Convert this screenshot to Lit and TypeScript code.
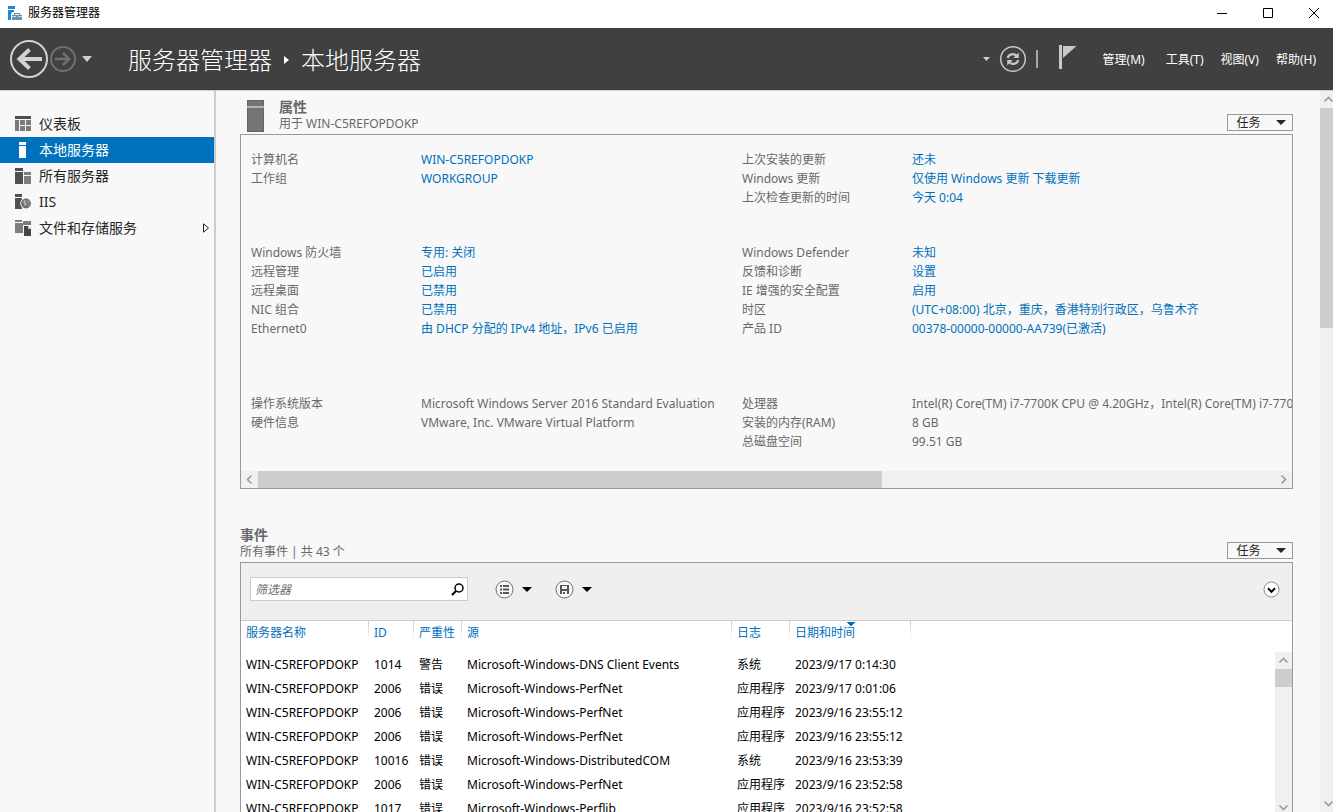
import { LitElement, html, css, svg, nothing } from "lit";
import { customElement } from "lit/decorators.js";
import { classMap } from "lit/directives/class-map.js";

type Property = { name: string; value: string; link?: boolean };

const link = (name: string, value: string): Property => ({ name, value, link: true });
const plain = (name: string, value: string): Property => ({ name, value });

const PROPERTY_GROUPS: Property[][] = [
  [link("计算机名", "WIN-C5REFOPDOKP"), link("工作组", "WORKGROUP")],
  [
    link("上次安装的更新", "还未"),
    link("Windows 更新", "仅使用 Windows 更新 下载更新"),
    link("上次检查更新的时间", "今天 0:04"),
  ],
  [
    link("Windows 防火墙", "专用: 关闭"),
    link("远程管理", "已启用"),
    link("远程桌面", "已禁用"),
    link("NIC 组合", "已禁用"),
    link("Ethernet0", "由 DHCP 分配的 IPv4 地址，IPv6 已启用"),
  ],
  [
    link("Windows Defender", "未知"),
    link("反馈和诊断", "设置"),
    link("IE 增强的安全配置", "启用"),
    link("时区", "(UTC+08:00) 北京，重庆，香港特别行政区，乌鲁木齐"),
    link("产品 ID", "00378-00000-00000-AA739(已激活)"),
  ],
  [
    plain("操作系统版本", "Microsoft Windows Server 2016 Standard Evaluation"),
    plain("硬件信息", "VMware, Inc. VMware Virtual Platform"),
  ],
  [
    plain("处理器", "Intel(R) Core(TM) i7-7700K CPU @ 4.20GHz，Intel(R) Core(TM) i7-7700K CPU @ 4.20GHz"),
    plain("安装的内存(RAM)", "8 GB"),
    plain("总磁盘空间", "99.51 GB"),
  ],
];

const HOST = "WIN-C5REFOPDOKP";
const EVENTS: string[][] = [
  [HOST, "1014", "警告", "Microsoft-Windows-DNS Client Events", "系统", "2023/9/17 0:14:30"],
  [HOST, "2006", "错误", "Microsoft-Windows-PerfNet", "应用程序", "2023/9/17 0:01:06"],
  [HOST, "2006", "错误", "Microsoft-Windows-PerfNet", "应用程序", "2023/9/16 23:55:12"],
  [HOST, "2006", "错误", "Microsoft-Windows-PerfNet", "应用程序", "2023/9/16 23:55:12"],
  [HOST, "10016", "错误", "Microsoft-Windows-DistributedCOM", "系统", "2023/9/16 23:53:39"],
  [HOST, "2006", "错误", "Microsoft-Windows-PerfNet", "应用程序", "2023/9/16 23:52:58"],
  [HOST, "1017", "错误", "Microsoft-Windows-Perflib", "应用程序", "2023/9/16 23:52:58"],
];
const COLUMNS = ["服务器名称", "ID", "严重性", "源", "日志", "日期和时间"];

const caret = (w: number, h: number) => html`
  <svg width=${w} height=${h} viewBox="0 0 ${w} ${h}" fill="currentColor" aria-hidden="true">
    <path d="M0 0H${w}L${w / 2} ${h}Z" />
  </svg>`;

const CHEVRONS = {
  up: "M4.5 10.5L8.5 6.5L12.5 10.5",
  down: "M4.5 6.5L8.5 10.5L12.5 6.5",
  left: "M10.5 4.5L6.5 8.5L10.5 12.5",
  right: "M6.5 4.5L10.5 8.5L6.5 12.5",
};
const scrollButton = (dir: keyof typeof CHEVRONS, label: string) => html`
  <button class="scroll-btn" aria-label=${label}>
    <svg width="17" height="17" viewBox="0 0 17 17" fill="none" stroke="#9b9b9b" stroke-width="1.6" aria-hidden="true">
      <path d=${CHEVRONS[dir]} />
    </svg>
  </button>`;

const NAV_ICONS = {
  dashboard: svg`
    <path d="M0 0H16V3H0Z" fill="#4f4f4f"/>
    <path d="M0 4H4V15H0ZM5 4H10V9H5ZM11 4H16V9H11ZM5 10H10V15H5ZM11 10H16V15H11Z" fill="#7a7a7a"/>`,
  local: svg`<path d="M4 0H11V3H4ZM4 4H11V16H4Z" fill="#fff"/>`,
  all: svg`
    <path d="M0 0H8V3H0ZM0 4H8V16H0Z" fill="#505050"/>
    <path d="M9 4H16V7H9ZM9 8H16V16H9Z" fill="#7d7d7d"/>`,
  iis: svg`
    <path d="M0 0H7V3H0ZM0 4H7V15H0Z" fill="#505050"/>
    <circle cx="11" cy="9.5" r="5.8" fill="#f8f8f8"/>
    <circle cx="11" cy="9.5" r="4.9" fill="#6d6d6d"/>
    <path d="M8 7.5L10 6L11 7L10 8.500L12 9.500L11 12L9.500 11.500L9 9.500ZM12.500 6L14.500 8L13.500 9L12.500 8ZM13 10.500L14.500 10.500L13.500 12.500Z" fill="#b5b5b5"/>`,
  storage: svg`
    <path d="M0 0H7V2H0ZM0 3H8V13H0Z" fill="#7d7d7d"/>
    <path d="M8 1H16V5H8Z" fill="#7d7d7d"/>
    <path d="M9 6H13L16 9V16H9V6Z" fill="#454545"/>
    <path d="M13 5.500L16.500 9H13Z" fill="#cfcfcf"/>`,
};

@customElement("app-root")
export class AppRoot extends LitElement {
  static styles = css`
    :host {
      display: flex;
      flex-direction: column;
      height: 100vh;
      overflow: hidden;
      background: #f8f8f8;
      color: #686868;
      font: 12px/16px "Noto Sans", "Noto Sans CJK SC", sans-serif;
    }
    *, *::before, *::after { box-sizing: border-box; }
    svg { display: block; flex: none; }
    button {
      display: inline-flex;
      align-items: center;
      justify-content: center;
      padding: 0;
      border: 0;
      background: none;
      color: inherit;
      font: inherit;
    }
    a { color: #0071bc; text-decoration: none; }
    h1, h2, p, dl, dd, ul { margin: 0; padding: 0; }

    .titlebar {
      flex: none;
      display: flex;
      align-items: center;
      height: 28px;
      padding: 0 14px 3px 8px;
      gap: 5px;
      background: #fff;
      color: #000;
    }
    .window-buttons { display: flex; gap: 36px; margin-left: auto; }

    .header {
      flex: none;
      display: flex;
      align-items: center;
      height: 62px;
      padding: 0 17px 0 9px;
      background: #404040;
      color: #fff;
    }
    .history { display: flex; align-items: center; gap: 1px; color: #cfcfcf; }
    .history-menu { width: 20px; height: 24px; }
    .crumbs {
      display: flex;
      align-items: center;
      gap: 12px;
      margin-left: 31px;
      padding-top: 1px;
      font-size: 24px;
      line-height: 32px;
      font-weight: 300;
      white-space: nowrap;
    }
    .crumbs h1 { font: inherit; }
    .crumbs a { color: inherit; }
    .commands { display: flex; align-items: center; margin-left: auto; color: #cfcfcf; gap: 9px; }
    .divider { width: 2px; height: 18px; background: #a8a8a8; }
    .flag { margin: 0 17px 4px 12px; }
    .menus { display: flex; gap: 17px; padding-top: 2px; color: #fff; white-space: nowrap; }
    .menus button:first-child { margin-right: 4px; }

    .body { flex: 1; display: flex; min-height: 0; border-top: 1px solid #ccc; }
    .sidebar {
      flex: 0 0 216px;
      padding-top: 20px;
      border-right: 2px solid #ccc;
    }
    .sidebar ul { list-style: none; }
    .nav {
      display: flex;
      align-items: center;
      gap: 8px;
      height: 26px;
      padding: 0 4px 0 15px;
      color: #262626;
      font-size: 14px;
      line-height: 20px;
    }
    .nav.selected { background: #0071bc; color: #fff; }
    .expander { margin-left: auto; }

    main { flex: 1; min-width: 0; overflow: hidden; padding: 6px 27px 0 24px; }
    .section-head { display: flex; align-items: flex-end; height: 37px; }
    .section-head.events { margin-top: 36px; }
    .server-icon { margin: 0 15px 2px 7px; }
    .headings { flex: 1; padding-bottom: 2px; }
    .section-head h2 { margin-bottom: 1px; font-size: 14px; line-height: 16px; font-weight: 700; }
    .tasks {
      width: 66px;
      height: 17px;
      margin-bottom: 3px;
      padding-left: 2px;
      gap: 15px;
      border: 1px solid #999;
      color: #262626;
    }

    .panel { border: 1px solid #999; }
    .viewport { overflow: hidden; padding: 15px 0 20px 10px; }
    .groups {
      display: grid;
      grid-template-columns: 491px max-content;
      grid-template-rows: 93px 151px 57px;
    }
    .group {
      display: grid;
      grid-template-columns: 170px max-content;
      grid-auto-rows: 19px;
      line-height: 19px;
      white-space: nowrap;
    }

    .scroll-btn { flex: none; width: 17px; height: 17px; }
    .hscroll { display: flex; height: 17px; background: #f0f0f0; }
    .vscroll { display: flex; flex-direction: column; background: #f0f0f0; overflow: hidden; }
    .track { flex: 1; min-height: 0; }
    .hscroll .thumb { width: 61.4%; height: 100%; background: #cdcdcd; }
    .vscroll .thumb { background: #cdcdcd; }
    .page-scroll { flex: 0 0 13px; }
    .page-scroll .thumb { height: 32%; }
    .list-scroll { flex: 0 0 17px; margin-top: 31px; height: 164px; }
    .list-scroll .thumb { height: 18px; }

    .toolbar {
      display: flex;
      align-items: center;
      height: 58px;
      padding: 0 12px 5px 9px;
      background: #efefef;
      border-bottom: 1px solid #ccc;
      color: #000;
    }
    .filter {
      display: flex;
      align-items: center;
      width: 218px;
      height: 24px;
      margin-right: 27px;
      padding-right: 3px;
      border: 1px solid #ccc;
      background: #fff;
    }
    .filter input {
      flex: 1;
      min-width: 0;
      height: 22px;
      padding: 0 4px;
      border: 0;
      outline: 0;
      background: none;
      font: inherit;
    }
    .filter input::placeholder { color: #6d6d6d; font-style: italic; opacity: 1; }
    .split { gap: 8px; margin-right: 23px; }
    .expand { margin-left: auto; }

    .list { display: flex; justify-content: space-between; background: #fff; color: #000; }
    table { border-collapse: collapse; table-layout: fixed; width: 670px; }
    th, td { padding: 0 0 0 5px; text-align: left; white-space: nowrap; font-weight: 400; }
    th {
      height: 32px;
      padding-bottom: 8px;
      color: #0071bc;
      background: linear-gradient(#ccc, #fff) right top / 1px 20px no-repeat;
    }
    th.sorted {
      background:
        conic-gradient(from -45deg at 50% 100%, #0071bc 90deg, transparent 0) 56px 1px / 10px 5px no-repeat,
        linear-gradient(#ccc, #fff) right top / 1px 20px no-repeat;
    }
    td { height: 24px; }
    .c0 { width: 128px; }
    .c1 { width: 45px; }
    .c2 { width: 48px; }
    .c3 { width: 270px; }
    .c4 { width: 58px; }
    .c5 { width: 121px; }
  `;

  private navItem(icon: keyof typeof NAV_ICONS, label: string, selected = false, expandable = false) {
    return html`<li>
      <a href="#" class=${classMap({ nav: true, selected })} aria-current=${selected ? "page" : nothing}>
        <svg width="16" height="16" viewBox="0 0 16 16" aria-hidden="true">${NAV_ICONS[icon]}</svg>
        <span>${label}</span>
        ${expandable
          ? html`<svg class="expander" width="8" height="10" viewBox="0 0 8 10" fill="none" stroke="#262626" aria-hidden="true">
              <path d="M1.500 0.800V9.200L6.500 5Z" />
            </svg>`
          : nothing}
      </a>
    </li>`;
  }

  private group(items: Property[]) {
    return html`<dl class="group">
      ${items.map(
        (p) => html`<dt>${p.name}</dt>
          <dd>${p.link ? html`<a href="#">${p.value}</a>` : p.value}</dd>`
      )}
    </dl>`;
  }

  private tasksButton() {
    return html`<button class="tasks"><span>任务</span>${caret(10, 5)}</button>`;
  }

  render() {
    return html`
      <div class="titlebar">
        <svg width="15" height="14" viewBox="0 0 15 14" aria-hidden="true">
          <path d="M0 0H7V3H0ZM0 4H6V6H4L3 8V14H0Z" fill="#1e88d8" />
          <path d="M4 9H14V14H4Z" fill="#7090a8" />
          <path d="M6.500 9V7.500H11.500V9" fill="none" stroke="#7090a8" stroke-width="1.200" />
          <path d="M4 10.500H8M10 10.500H14" stroke="#dfe8ee" stroke-width=".8" />
        </svg>
        <span>服务器管理器</span>
        <div class="window-buttons">
          <button aria-label="最小化">
            <svg width="10" height="10" viewBox="0 0 10 10" stroke="#000"><path d="M0 5.500H10" /></svg>
          </button>
          <button aria-label="最大化">
            <svg width="10" height="10" viewBox="0 0 10 10" stroke="#000" fill="none"><path d="M.5 .5H9.500V9.500H.5Z" /></svg>
          </button>
          <button aria-label="关闭">
            <svg width="10" height="10" viewBox="0 0 10 10" stroke="#000"><path d="M0 0L10 10M10 0L0 10" /></svg>
          </button>
        </div>
      </div>

      <header class="header">
        <div class="history">
          <button aria-label="后退">
            <svg width="40" height="40" viewBox="0 0 40 40" fill="none" stroke="#d2d2d2">
              <circle cx="20" cy="20" r="18" stroke-width="2" />
              <path d="M33 20H11" stroke-width="4" />
              <path d="M20.500 10.500L10.500 20L20.500 29.500" stroke-width="4" />
            </svg>
          </button>
          <button aria-label="前进">
            <svg width="26" height="26" viewBox="0 0 26 26" fill="none" stroke="#707070">
              <circle cx="13" cy="13" r="12" stroke-width="2" />
              <path d="M5 13H19" stroke-width="2.500" />
              <path d="M13 7L19 13L13 19" stroke-width="2.500" />
            </svg>
          </button>
          <button class="history-menu" aria-label="历史记录">${caret(10, 6)}</button>
        </div>
        <nav class="crumbs" aria-label="位置">
          <a href="#">服务器管理器</a>
          <svg width="5" height="8" viewBox="0 0 5 8" fill="#fff" aria-hidden="true"><path d="M0 0L5 4L0 8Z" /></svg>
          <h1>本地服务器</h1>
        </nav>
        <div class="commands">
          <button aria-label="刷新选项">${caret(7, 4)}</button>
          <button aria-label="刷新">
            <svg width="28" height="28" viewBox="0 0 28 28" fill="none" stroke="#c8c8c8">
              <circle cx="14" cy="14" r="12.300" stroke-width="1.500" />
              <path d="M8.800 13C9.300 9.500 14.500 7.500 17.800 11M19.200 15C18.700 18.500 13.500 20.500 10.200 17" stroke-width="2.200" />
              <path d="M19.800 7.500V13H14.300ZM8.200 20.500V15H13.700Z" fill="#c8c8c8" stroke="none" />
            </svg>
          </button>
          <span class="divider"></span>
          <button class="flag" aria-label="通知">
            <svg width="18" height="24" viewBox="0 0 18 24" fill="#c8c8c8">
              <path d="M0 0H3V24H0Z" />
              <path d="M4 1H17.500L4 13Z" />
            </svg>
          </button>
          <div class="menus">
            <button>管理(M)</button>
            <button>工具(T)</button>
            <button>视图(V)</button>
            <button>帮助(H)</button>
          </div>
        </div>
      </header>

      <div class="body">
        <nav class="sidebar" aria-label="服务器角色">
          <ul>
            ${this.navItem("dashboard", "仪表板")}
            ${this.navItem("local", "本地服务器", true)}
            ${this.navItem("all", "所有服务器")}
            ${this.navItem("iis", "IIS")}
            ${this.navItem("storage", "文件和存储服务", false, true)}
          </ul>
        </nav>

        <main>
          <section>
            <div class="section-head">
              <svg class="server-icon" width="17" height="32" viewBox="0 0 17 32" aria-hidden="true">
                <path d="M0 0H17V32H0Z" fill="#666" />
                <path d="M1 1H16V31H1Z" fill="#757575" />
                <path d="M0 6H17V8H0Z" fill="#b4b4b4" />
              </svg>
              <div class="headings">
                <h2>属性</h2>
                <p>用于 WIN-C5REFOPDOKP</p>
              </div>
              ${this.tasksButton()}
            </div>
            <div class="panel">
              <div class="viewport">
                <div class="groups">${PROPERTY_GROUPS.map((g) => this.group(g))}</div>
              </div>
              <div class="hscroll">
                ${scrollButton("left", "向左滚动")}
                <div class="track"><div class="thumb"></div></div>
                ${scrollButton("right", "向右滚动")}
              </div>
            </div>
          </section>

          <section>
            <div class="section-head events">
              <div class="headings">
                <h2>事件</h2>
                <p>所有事件 | 共 43 个</p>
              </div>
              ${this.tasksButton()}
            </div>
            <div class="panel">
              <div class="toolbar">
                <div class="filter">
                  <input type="text" placeholder="筛选器" aria-label="筛选器" />
                  <button aria-label="搜索">
                    <svg width="13" height="13" viewBox="0 0 13 13" fill="none" stroke="#000">
                      <circle cx="8" cy="5" r="4" stroke-width="1.500" />
                      <path d="M5 8L1 12" stroke-width="2.200" />
                    </svg>
                  </button>
                </div>
                <button class="split" aria-label="条件">
                  <svg width="19" height="19" viewBox="0 0 19 19" fill="none">
                    <circle cx="9.500" cy="9.500" r="8.500" fill="#f8f8f8" stroke="#6d6d6d" />
                    <path d="M5 5H7V7H5ZM8 5H14V7H8ZM5 8.500H7V10.500H5ZM8 8.500H14V10.500H8ZM5 12H7V14H5ZM8 12H14V14H8Z" fill="#555" />
                  </svg>
                  ${caret(10, 5)}
                </button>
                <button class="split" aria-label="保存查询">
                  <svg width="19" height="19" viewBox="0 0 19 19" fill="none">
                    <circle cx="9.500" cy="9.500" r="8.500" fill="#f8f8f8" stroke="#6d6d6d" />
                    <path d="M5 5H14V14H5ZM7 6V9H12V6ZM7 11V14H8V12H10V14H12V11Z" fill="#555" fill-rule="evenodd" />
                  </svg>
                  ${caret(10, 5)}
                </button>
                <button class="expand" aria-label="展开">
                  <svg width="17" height="17" viewBox="0 0 17 17" fill="none">
                    <circle cx="8.500" cy="8.500" r="7.500" fill="#fff" stroke="#8a8a8a" />
                    <path d="M5 7.300L8.500 10.800L12 7.300" stroke="#000" stroke-width="2" />
                  </svg>
                </button>
              </div>
              <div class="list">
                <table>
                  <thead>
                    <tr>
                      ${COLUMNS.map(
                        (c, i) => html`<th
                          class="c${i} ${i === 5 ? "sorted" : ""}"
                          scope="col"
                          aria-sort=${i === 5 ? "descending" : nothing}
                        >${c}</th>`
                      )}
                    </tr>
                  </thead>
                  <tbody>
                    ${EVENTS.map((row) => html`<tr>${row.map((v) => html`<td>${v}</td>`)}</tr>`)}
                  </tbody>
                </table>
                <div class="vscroll list-scroll">
                  ${scrollButton("up", "向上滚动")}
                  <div class="track"><div class="thumb"></div></div>
                  ${scrollButton("down", "向下滚动")}
                </div>
              </div>
            </div>
          </section>
        </main>

        <div class="vscroll page-scroll">
          ${scrollButton("up", "页面向上滚动")}
          <div class="track"><div class="thumb"></div></div>
          ${scrollButton("down", "页面向下滚动")}
        </div>
      </div>
    `;
  }
}
